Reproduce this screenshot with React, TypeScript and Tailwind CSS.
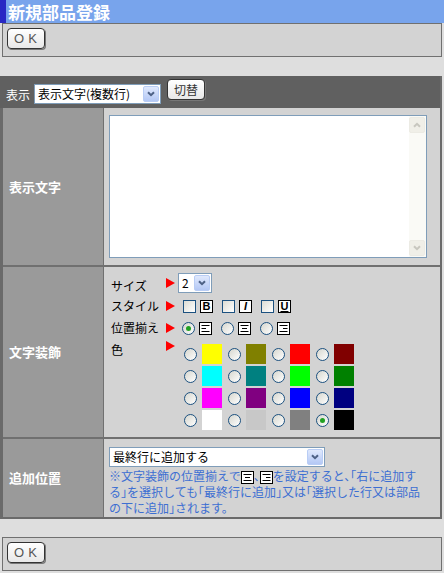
import React from 'react';

// ── Shared bits ──────────────────────────────────────────────────────────────

const JP = "font-['MS_UI_Gothic','Noto_Sans_CJK_JP',sans-serif]";

const COLORS = [
  ['#ffff00', '#808000', '#ff0000', '#800000'],
  ['#00ffff', '#008080', '#00ff00', '#008000'],
  ['#ff00ff', '#800080', '#0000ff', '#000080'],
  ['#ffffff', '#c8c8c8', '#808080', '#000000'],
];

function OkButton() {
  return (
    <button
      type="button"
      className="flex h-[21px] w-[38px] items-center justify-center rounded-[4px] border border-[#333] bg-gradient-to-b from-white to-[#e8e8e8] pl-[3px] font-['Liberation_Sans',sans-serif] text-[13px] tracking-[4px] text-[#555] shadow-[1px_1px_0_#777]"
    >
      OK
    </button>
  );
}

function Chevron() {
  return (
    <svg width="8" height="6" viewBox="0 0 8 6">
      <path d="M1 1.2 L4 4.2 L7 1.2" fill="none" stroke="#4d6185" strokeWidth="2" />
    </svg>
  );
}

function Select({ value, className }: { value: string; className: string }) {
  return (
    <div className={`flex items-stretch border border-[#7f9db9] bg-white ${className}`}>
      <span className="flex flex-1 items-center truncate pl-[3px] text-[12px] leading-none">{value}</span>
      <span className="m-[1px] flex w-[16px] items-center justify-center rounded-[2px] border border-[#b9cdf5] bg-gradient-to-b from-[#e0e9fd] to-[#b4c8f5]">
        <Chevron />
      </span>
    </div>
  );
}

function Radio({ checked }: { checked?: boolean }) {
  return (
    <span className="inline-flex h-[13px] w-[13px] shrink-0 items-center justify-center rounded-full border border-[#1c5180] bg-gradient-to-br from-[#d6d6ce] to-white">
      {checked && <span className="h-[5px] w-[5px] rounded-full bg-[#21a121]" />}
    </span>
  );
}

function Checkbox() {
  return (
    <span className="inline-block h-[13px] w-[13px] shrink-0 border border-[#1c5180] bg-gradient-to-br from-[#dcdcd4] to-white" />
  );
}

function Tri() {
  return (
    <svg width="9" height="10" viewBox="0 0 9 10" className="shrink-0">
      <path d="M0 0 L9 5 L0 10 Z" fill="#ff0000" />
    </svg>
  );
}

function FmtIcon({ kind }: { kind: 'B' | 'I' | 'U' }) {
  return (
    <span className="inline-flex h-[13px] w-[13px] shrink-0 items-center justify-center border border-black bg-white font-['Liberation_Sans',sans-serif] text-[11px] font-bold leading-none">
      <span className={kind === 'I' ? 'italic' : kind === 'U' ? 'underline' : ''}>{kind}</span>
    </span>
  );
}

function AlignIcon({ align }: { align: 'left' | 'center' | 'right' }) {
  const short = align === 'left' ? 'M2.5 6.5 H7' : align === 'center' ? 'M4 6.5 H9' : 'M6 6.5 H10.5';
  return (
    <svg width="13" height="13" viewBox="0 0 13 13" className="inline-block shrink-0 align-middle">
      <rect x="0.5" y="0.5" width="12" height="12" fill="#fff" stroke="#000" />
      <path d={`M2.5 3.5 H10.5 ${short} M2.5 9.5 H10.5`} stroke="#000" strokeWidth="1" />
    </svg>
  );
}

function Label({ children }: { children: React.ReactNode }) {
  return (
    <div className="flex items-center bg-[#9a9a9a] pl-[6px] text-[13px] font-bold text-white">{children}</div>
  );
}

// ── Main ─────────────────────────────────────────────────────────────────────

export default function App() {
  return (
    <div className={`h-[573px] w-[444px] overflow-hidden bg-[#dedede] text-[12px] text-black ${JP}`}>
      {/* Title bar */}
      <div className="flex h-[23px] bg-[#78a4ec]">
        <div className="w-[6px] bg-[#2828c4]" />
        <h1 className="pl-[2px] text-[17px] font-bold leading-[23px] text-white">新規部品登録</h1>
      </div>

      {/* Top OK panel */}
      <div className="mx-[2px] h-[34px] border border-[#707070] bg-[#d3d3d3] pl-[4px] pt-[4px]">
        <OkButton />
      </div>

      <div className="h-[19px]" />

      {/* Form */}
      <div className="mr-[2px] border-b-[2px] border-l-[3px] border-r-[2px] border-[#6a6a6a]">
        {/* Display selector bar */}
        <div className="-ml-[3px] flex h-[32px] items-start gap-[4px] bg-[#606060] pl-[6px]">
          <span className="mt-[13px] text-[12px] leading-none text-white">表示</span>
          <Select value="表示文字(複数行)" className="mt-[8px] h-[20px] w-[127px]" />
          <button
            type="button"
            className="ml-[2px] mt-[3px] h-[21px] w-[38px] rounded-[4px] border border-[#333] bg-gradient-to-b from-white to-[#e8e8e8] text-[12px] text-[#333] shadow-[1px_1px_0_#777]"
          >
            切替
          </button>
        </div>

        <div className="grid grid-cols-[100px_1fr] gap-x-[1px] gap-y-[2px] bg-[#707070]">
          {/* 表示文字 */}
          <Label>表示文字</Label>
          <div className="h-[157px] bg-[#d3d3d3] pl-[5px] pt-[7px]">
            <div className="flex h-[143px] w-[318px] border border-[#7f9db9] bg-white">
              <div className="flex-1" />
              <div className="flex w-[17px] flex-col justify-between bg-[#fafaf6] py-[1px] pr-[1px]">
                <div className="flex h-[16px] items-center justify-center rounded-[2px] border border-[#ecebe4] bg-[#f0efe8]">
                  <svg width="8" height="6" viewBox="0 0 8 6">
                    <path d="M1 4.8 L4 1.8 L7 4.8" fill="none" stroke="#c8c7bf" strokeWidth="2" />
                  </svg>
                </div>
                <div className="flex h-[16px] items-center justify-center rounded-[2px] border border-[#ecebe4] bg-[#f0efe8]">
                  <svg width="8" height="6" viewBox="0 0 8 6">
                    <path d="M1 1.2 L4 4.2 L7 1.2" fill="none" stroke="#c8c7bf" strokeWidth="2" />
                  </svg>
                </div>
              </div>
            </div>
          </div>

          {/* 文字装飾 */}
          <Label>文字装飾</Label>
          <div className="h-[170px] bg-[#d3d3d3] pl-[7px] pt-[6px]">
            <div className="flex h-[22px] items-start">
              <span className="mt-[4px] w-[55px]">サイズ</span>
              <span className="mt-[5px]"><Tri /></span>
              <Select value="2" className="ml-[3px] h-[20px] w-[34px]" />
            </div>
            <div className="flex h-[22px] items-center">
              <span className="w-[55px]">スタイル</span>
              <Tri />
              <span className="ml-[8px] flex items-center gap-[4px]">
                <Checkbox />
                <FmtIcon kind="B" />
              </span>
              <span className="ml-[9px] flex items-center gap-[4px]">
                <Checkbox />
                <FmtIcon kind="I" />
              </span>
              <span className="ml-[9px] flex items-center gap-[4px]">
                <Checkbox />
                <FmtIcon kind="U" />
              </span>
            </div>
            <div className="flex h-[22px] items-center">
              <span className="w-[55px]">位置揃え</span>
              <Tri />
              <span className="ml-[7px] flex items-center gap-[4px]">
                <Radio checked />
                <AlignIcon align="left" />
              </span>
              <span className="ml-[9px] flex items-center gap-[4px]">
                <Radio />
                <AlignIcon align="center" />
              </span>
              <span className="ml-[9px] flex items-center gap-[4px]">
                <Radio />
                <AlignIcon align="right" />
              </span>
            </div>
            <div className="flex items-start">
              <span className="mt-[2px] w-[55px]">色</span>
              <span className="mt-[2px]"><Tri /></span>
              <div className="ml-[9px] mt-[5px] grid grid-cols-4 gap-y-[2px]">
                {COLORS.flat().map((c, i) => (
                  <div key={i} className="flex w-[44px] items-center gap-[5px]">
                    <Radio checked={i === COLORS.flat().length - 1} />
                    <span className="h-[20px] w-[20px]" style={{ background: c }} />
                  </div>
                ))}
              </div>
            </div>
          </div>

          {/* 追加位置 */}
          <Label>追加位置</Label>
          <div className="h-[78px] bg-[#d3d3d3] pl-[5px] pt-[8px]">
            <Select value="最終行に追加する" className="h-[20px] w-[216px]" />
            <p className="mt-[1px] whitespace-nowrap text-[12px] leading-[16px] text-[#3d6fd2] [font-feature-settings:'halt']">
              ※文字装飾の位置揃えで<AlignIcon align="center" />、<AlignIcon align="right" />を設定すると、「右に追加す
              <br />
              る」を選択しても「最終行に追加」又は「選択した行又は部品
              <br />
              の下に追加」されます。
            </p>
          </div>
        </div>
      </div>

      <div className="h-[18px]" />

      {/* Bottom OK panel */}
      <div className="mx-[2px] h-[34px] border border-[#707070] bg-[#d3d3d3] pl-[4px] pt-[4px]">
        <OkButton />
      </div>
    </div>
  );
}
